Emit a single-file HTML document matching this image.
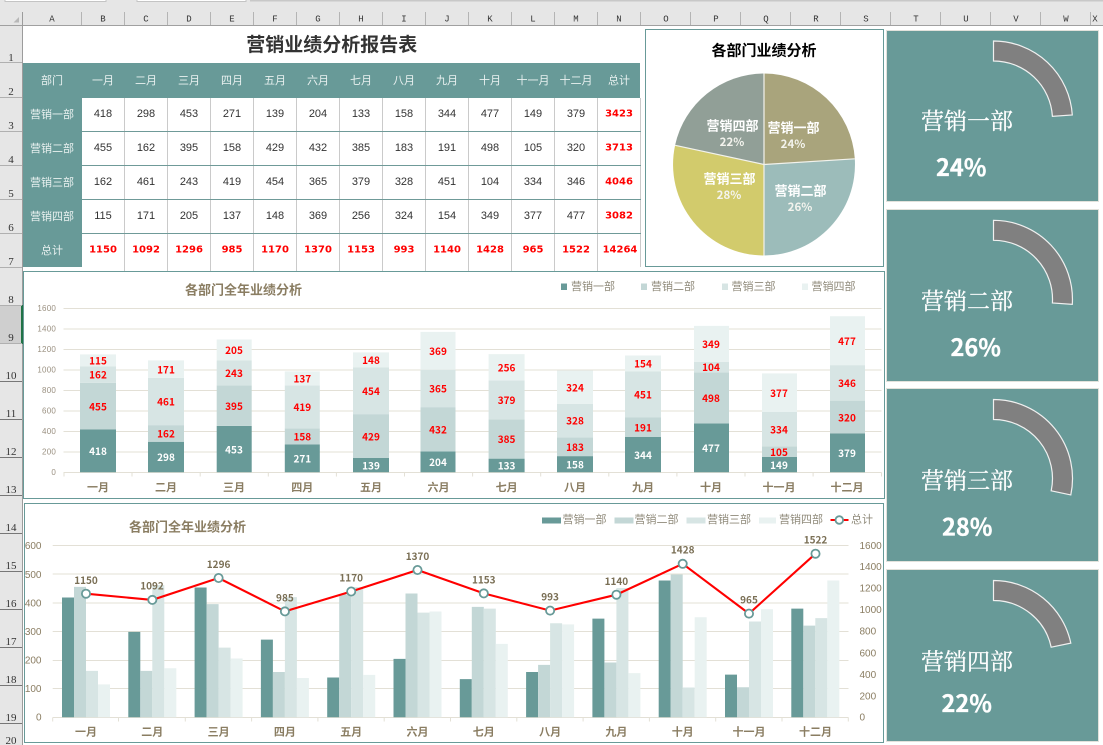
<!DOCTYPE html>
<html lang="zh"><head><meta charset="utf-8"><title>营销业绩分析报告表</title>
<style>
html,body{margin:0;padding:0;background:#fff;width:1103px;height:745px;overflow:hidden}
svg{display:block}
text{font-family:"Liberation Sans","Noto Sans CJK SC",sans-serif}
.m{text-anchor:middle;dominant-baseline:central}
.c{font-family:"Liberation Mono",monospace;font-size:9px;fill:#333;text-anchor:middle;dominant-baseline:central}
.r{font-family:"Liberation Serif",serif;font-size:11px;fill:#333;text-anchor:middle;dominant-baseline:central}
.h{font-family:"Noto Sans CJK SC",sans-serif;font-size:11px;fill:#e9f1f0;text-anchor:middle;dominant-baseline:central}
.n{font-size:11px;fill:#333;text-anchor:middle;dominant-baseline:central}
.t{font-family:"DejaVu Sans",sans-serif;font-weight:bold;font-size:10px;fill:#f00;text-anchor:middle;dominant-baseline:central}
.ct{font-family:"Noto Sans CJK SC",sans-serif;font-weight:bold;font-size:13px;fill:#8a7d62;text-anchor:middle;dominant-baseline:central}
.lg{font-family:"Noto Sans CJK SC",sans-serif;font-size:11px;fill:#8f8a7a;dominant-baseline:central}
.ax{font-size:8px;fill:#9a9080;text-anchor:end;dominant-baseline:central;letter-spacing:.2px}
.mo{font-family:"Noto Sans CJK SC",sans-serif;font-weight:bold;font-size:11px;fill:#8a7d62;text-anchor:middle;dominant-baseline:central}
.w{font-family:"Noto Sans CJK SC",sans-serif;font-weight:bold;font-size:10px;fill:#fff;text-anchor:middle}
.v{font-family:"Noto Sans CJK SC",sans-serif;font-weight:bold;font-size:10px;fill:#f00;text-anchor:middle}
.p{font-family:"Noto Sans CJK SC",sans-serif;font-weight:bold;font-size:13px;fill:#fff;text-anchor:middle;dominant-baseline:central}
.q{font-family:"Noto Sans CJK SC",sans-serif;font-weight:bold;font-size:11.5px;fill:#f4f4ee;text-anchor:middle;dominant-baseline:central}
.a2{font-size:10px;fill:#8a7d62;dominant-baseline:central}
.l2{font-family:"Noto Sans CJK SC",sans-serif;font-weight:bold;font-size:10px;fill:#7a6f55;text-anchor:middle}
.ci{font-family:"Noto Serif CJK SC",serif;font-size:23px;fill:#fff;stroke:#fff;stroke-width:.25px;dominant-baseline:central}
.cp{font-family:"Noto Sans CJK SC",sans-serif;font-weight:bold;font-size:23.5px;fill:#fff;stroke:#fff;stroke-width:.3px;dominant-baseline:central}
</style></head><body>
<svg width="1103" height="745" viewBox="0 0 1103 745" xmlns="http://www.w3.org/2000/svg">
<rect width="1103" height="745" fill="#fff"/>
<!-- sheet chrome -->
<rect width="1103" height="25" fill="#e6e6e6"/>
<rect width="22.5" height="745" fill="#e6e6e6"/>
<rect x="5" y="0" width="101" height="1.5" fill="#fff"/><rect x="137" y="0" width="109" height="1.5" fill="#fff"/><rect x="250" y="0" width="853" height="1.5" fill="#c8c8c8"/>
<path d="M106 0V1.5H5V0M246 0V1.5H137V0" stroke="#c4c4c4" fill="none"/>
<rect x="0" y="25" width="1103" height="1" fill="#a0a0a0"/>
<rect x="22" y="12" width="1" height="733" fill="#9c9c9c"/>
<path d="M19 17v5.5h-5.5z" fill="#b8b8b8"/>
<path d="M81.5 12v13M124.5 12v13M167.5 12v13M210.5 12v13M253.5 12v13M296.5 12v13M339.5 12v13M382.5 12v13M425.5 12v13M468.5 12v13M511.5 12v13M554.5 12v13M597.5 12v13M640.5 12v13M690.5 12v13M740.5 12v13M790.5 12v13M840.5 12v13M890.5 12v13M940.5 12v13M990.5 12v13M1040.5 12v13M1090.5 12v13" stroke="#b4b4b4"/>
<text class="c" x="52" y="19.5">A</text><text class="c" x="103" y="19.5">B</text><text class="c" x="146" y="19.5">C</text><text class="c" x="189" y="19.5">D</text><text class="c" x="232" y="19.5">E</text><text class="c" x="275" y="19.5">F</text><text class="c" x="318" y="19.5">G</text><text class="c" x="361" y="19.5">H</text><text class="c" x="404" y="19.5">I</text><text class="c" x="447" y="19.5">J</text><text class="c" x="490" y="19.5">K</text><text class="c" x="533" y="19.5">L</text><text class="c" x="576" y="19.5">M</text><text class="c" x="619" y="19.5">N</text><text class="c" x="666" y="19.5">O</text><text class="c" x="716" y="19.5">P</text><text class="c" x="766" y="19.5">Q</text><text class="c" x="816" y="19.5">R</text><text class="c" x="866" y="19.5">S</text><text class="c" x="916" y="19.5">T</text><text class="c" x="966" y="19.5">U</text><text class="c" x="1016" y="19.5">V</text><text class="c" x="1066" y="19.5">W</text><text class="c" x="1095" y="19.5">X</text>
<rect x="0" y="305" width="21" height="39" fill="#cfcfcf"/><rect x="21" y="305" width="2" height="39" fill="#217346"/>
<path d="M0 62.5h22M0 97.5h22M0 131.5h22M0 165.5h22M0 199.5h22M0 233.5h22M0 267.5h22M0 305.5h22M0 343.5h22" stroke="#b0b0b0"/>
<path d="M0 381.5h22M0 419.5h22M0 457.5h22M0 495.5h22M0 533.5h22M0 571.5h22M0 609.5h22M0 647.5h22M0 685.5h22M0 723.5h22" stroke="#777"/>
<text class="r" x="11" y="58">1</text><text class="r" x="11" y="92">2</text><text class="r" x="11" y="126">3</text><text class="r" x="11" y="160">4</text><text class="r" x="11" y="194">5</text><text class="r" x="11" y="228">6</text><text class="r" x="11" y="262">7</text><text class="r" x="11" y="300">8</text><text class="r" x="11" y="338" fill="#217346">9</text><text class="r" x="11" y="376">10</text><text class="r" x="11" y="414">11</text><text class="r" x="11" y="452">12</text><text class="r" x="11" y="490">13</text><text class="r" x="11" y="528">14</text><text class="r" x="11" y="566">15</text><text class="r" x="11" y="604">16</text><text class="r" x="11" y="642">17</text><text class="r" x="11" y="680">18</text><text class="r" x="11" y="718">19</text><text class="r" x="11" y="741">20</text>
<!-- table -->
<text x="331.7" y="43.5" class="m" style="font-family:'Noto Sans CJK SC',sans-serif;font-weight:bold;font-size:19px;fill:#333">营销业绩分析报告表</text>
<rect x="23" y="63" width="617" height="35" fill="#689a98"/><rect x="23" y="63" width="59" height="204" fill="#689a98"/>
<path d="M124.5 98v173M167.5 98v173M210.5 98v173M253.5 98v173M296.5 98v173M339.5 98v173M382.5 98v173M425.5 98v173M468.5 98v173M511.5 98v173M554.5 98v173M597.5 98v173M640.5 98v169" stroke="#cacaca"/>
<path d="M82 131.5h559M82 165.5h559M82 199.5h559M82 233.5h559" stroke="#6f9a98"/>
<text class="h" x="52" y="80">部门</text><text class="h" x="103" y="80">一月</text><text class="h" x="146" y="80">二月</text><text class="h" x="189" y="80">三月</text><text class="h" x="232" y="80">四月</text><text class="h" x="275" y="80">五月</text><text class="h" x="318" y="80">六月</text><text class="h" x="361" y="80">七月</text><text class="h" x="404" y="80">八月</text><text class="h" x="447" y="80">九月</text><text class="h" x="490" y="80">十月</text><text class="h" x="533" y="80">十一月</text><text class="h" x="576" y="80">十二月</text><text class="h" x="619" y="80">总计</text>
<text class="h" x="52" y="114">营销一部</text><text class="h" x="52" y="148">营销二部</text><text class="h" x="52" y="182">营销三部</text><text class="h" x="52" y="216">营销四部</text><text class="h" x="52" y="250">总计</text>
<text class="n" x="103" y="114">418</text><text class="n" x="146" y="114">298</text><text class="n" x="189" y="114">453</text><text class="n" x="232" y="114">271</text><text class="n" x="275" y="114">139</text><text class="n" x="318" y="114">204</text><text class="n" x="361" y="114">133</text><text class="n" x="404" y="114">158</text><text class="n" x="447" y="114">344</text><text class="n" x="490" y="114">477</text><text class="n" x="533" y="114">149</text><text class="n" x="576" y="114">379</text><text class="t" x="619" y="114">3423</text>
<text class="n" x="103" y="148">455</text><text class="n" x="146" y="148">162</text><text class="n" x="189" y="148">395</text><text class="n" x="232" y="148">158</text><text class="n" x="275" y="148">429</text><text class="n" x="318" y="148">432</text><text class="n" x="361" y="148">385</text><text class="n" x="404" y="148">183</text><text class="n" x="447" y="148">191</text><text class="n" x="490" y="148">498</text><text class="n" x="533" y="148">105</text><text class="n" x="576" y="148">320</text><text class="t" x="619" y="148">3713</text>
<text class="n" x="103" y="182">162</text><text class="n" x="146" y="182">461</text><text class="n" x="189" y="182">243</text><text class="n" x="232" y="182">419</text><text class="n" x="275" y="182">454</text><text class="n" x="318" y="182">365</text><text class="n" x="361" y="182">379</text><text class="n" x="404" y="182">328</text><text class="n" x="447" y="182">451</text><text class="n" x="490" y="182">104</text><text class="n" x="533" y="182">334</text><text class="n" x="576" y="182">346</text><text class="t" x="619" y="182">4046</text>
<text class="n" x="103" y="216">115</text><text class="n" x="146" y="216">171</text><text class="n" x="189" y="216">205</text><text class="n" x="232" y="216">137</text><text class="n" x="275" y="216">148</text><text class="n" x="318" y="216">369</text><text class="n" x="361" y="216">256</text><text class="n" x="404" y="216">324</text><text class="n" x="447" y="216">154</text><text class="n" x="490" y="216">349</text><text class="n" x="533" y="216">377</text><text class="n" x="576" y="216">477</text><text class="t" x="619" y="216">3082</text>
<text class="t" x="103" y="250">1150</text><text class="t" x="146" y="250">1092</text><text class="t" x="189" y="250">1296</text><text class="t" x="232" y="250">985</text><text class="t" x="275" y="250">1170</text><text class="t" x="318" y="250">1370</text><text class="t" x="361" y="250">1153</text><text class="t" x="404" y="250">993</text><text class="t" x="447" y="250">1140</text><text class="t" x="490" y="250">1428</text><text class="t" x="533" y="250">965</text><text class="t" x="576" y="250">1522</text><text class="t" x="620" y="250">14264</text>
<!-- pie -->
<rect x="645.5" y="29.5" width="238" height="237" fill="#fff" stroke="#689a98"/>
<text class="m" x="764" y="50" style="font-family:'Noto Sans CJK SC',sans-serif;font-weight:bold;font-size:15px;fill:#000">各部门业绩分析</text>
<path d="M764 164.5V73.5A91 91 0 0 1 854.8 158.8z" fill="#a9a47c"/>
<path d="M764 164.5L854.8 158.8A91 91 0 0 1 764 255.5z" fill="#9cbcba"/>
<path d="M764 164.5V255.5A91 91 0 0 1 675.1 145.3z" fill="#d2cb6c"/>
<path d="M764 164.5L675.1 145.3A91 91 0 0 1 764 73.5z" fill="#919f97"/>
<path d="M764 73.5V255.5M764 164.5L854.8 158.8M764 164.5L675.1 145.3" stroke="#f2f2ec" stroke-width="1.2" fill="none"/>
<text class="p" x="793.5" y="127">营销一部</text><text class="q" x="793" y="144">24%</text>
<text class="p" x="800.5" y="190">营销二部</text><text class="q" x="800" y="207">26%</text>
<text class="p" x="729.5" y="178">营销三部</text><text class="q" x="729" y="195">28%</text>
<text class="p" x="732.5" y="125">营销四部</text><text class="q" x="732" y="142">22%</text>
<!-- cards -->
<g fill="#689a98" stroke="#e2e2dc">
<rect x="886.5" y="30.5" width="212" height="171"/><rect x="886.5" y="209.5" width="212" height="172"/><rect x="886.5" y="388.5" width="212" height="173"/><rect x="886.5" y="569.5" width="212" height="172"/>
</g>
<g fill="#808080" stroke="#f0f0f0" stroke-width="1.2">
<path d="M993.5 41A79 79 0 0 1 1072.3 115L1052.4 116.3A59 59 0 0 0 993.5 61z"/>
<path d="M993.5 220.3A79 79 0 0 1 1072.3 304.3L1052.4 303A59 59 0 0 0 993.5 240.3z"/>
<path d="M993.5 399.5A79 79 0 0 1 1070.8 494.9L1051.2 490.8A59 59 0 0 0 993.5 419.5z"/>
<path d="M993.5 580.5A79 79 0 0 1 1070.8 643.1L1051.2 647.2A59 59 0 0 0 993.5 600.5z"/>
</g>
<text class="ci" x="921" y="119.5">营销一部</text><text class="cp" x="936" y="166">24%</text>
<text class="ci" x="921" y="299.5">营销二部</text><text class="cp" x="950.5" y="346">26%</text>
<text class="ci" x="921" y="479">营销三部</text><text class="cp" x="942" y="525.5">28%</text>
<text class="ci" x="921" y="660">营销四部</text><text class="cp" x="941.5" y="702">22%</text>
<!-- chart 1 -->
<rect x="23.5" y="271.5" width="861" height="227" fill="#fff" stroke="#689a98"/>
<text class="ct" x="243.5" y="289">各部门全年业绩分析</text>
<rect x="561" y="283.5" width="6" height="6.5" fill="#689a98"/><text class="lg" x="571" y="286">营销一部</text>
<rect x="641" y="283.5" width="6" height="6.5" fill="#c3d7d6"/><text class="lg" x="651" y="286">营销二部</text>
<rect x="722" y="283.5" width="6" height="6.5" fill="#d7e5e4"/><text class="lg" x="731.5" y="286">营销三部</text>
<rect x="802" y="283.5" width="6" height="6.5" fill="#e9f2f1"/><text class="lg" x="811.5" y="286">营销四部</text>
<path d="M63.5 308.5H881.5M63.5 329H881.5M63.5 349.5H881.5M63.5 370H881.5M63.5 390.5H881.5M63.5 411H881.5M63.5 431.5H881.5M63.5 452H881.5M63.5 472.5H881.5" stroke="#e3e0d6"/>
<path d="M64 472.5v4M132 472.5v4M200.2 472.5v4M268.3 472.5v4M336.4 472.5v4M404.5 472.5v4M472.6 472.5v4M540.7 472.5v4M608.8 472.5v4M676.9 472.5v4M745 472.5v4M813.1 472.5v4M881.5 472.5v4" stroke="#e3e0d6"/>
<text class="ax" x="56" y="308.5">1600</text><text class="ax" x="56" y="329">1400</text><text class="ax" x="56" y="349.5">1200</text><text class="ax" x="56" y="370">1000</text><text class="ax" x="56" y="390.5">800</text><text class="ax" x="56" y="411">600</text><text class="ax" x="56" y="431.5">400</text><text class="ax" x="56" y="452">200</text><text class="ax" x="56" y="472.5">0</text>
<g transform="translate(0 472.3) scale(1 -.1025)">
<path fill="#689a98" d="M80 0h36v418h-36zM148 0h36v298h-36zM216.7 0h35v453h-35zM284.8 0h35v271h-35zM353 0h36v139h-36zM420.5 0h35v204h-35zM488.6 0h36v133h-36zM557 0h36v158h-36zM625 0h36v344h-36zM694 0h35v477h-35zM762 0h35v149h-35zM830 0h35v379h-35z"/>
<path fill="#c3d7d6" d="M80 418h36v455h-36zM148 298h36v162h-36zM216.7 453h35v395h-35zM284.8 271h35v158h-35zM353 139h36v429h-36zM420.5 204h35v432h-35zM488.6 133h36v385h-36zM557 158h36v183h-36zM625 344h36v191h-36zM694 477h35v498h-35zM762 149h35v105h-35zM830 379h35v320h-35z"/>
<path fill="#d7e5e4" d="M80 873h36v162h-36zM148 460h36v461h-36zM216.7 848h35v243h-35zM284.8 429h35v419h-35zM353 568h36v454h-36zM420.5 636h35v365h-35zM488.6 518h36v379h-36zM557 341h36v328h-36zM625 535h36v451h-36zM694 975h35v104h-35zM762 254h35v334h-35zM830 699h35v346h-35z"/>
<path fill="#e9f2f1" d="M80 1035h36v115h-36zM148 921h36v171h-36zM216.7 1091h35v205h-35zM284.8 848h35v137h-35zM353 1022h36v148h-36zM420.5 1001h35v369h-35zM488.6 897h36v256h-36zM557 669h36v324h-36zM625 986h36v154h-36zM694 1079h35v349h-35zM762 588h35v377h-35zM830 1045h35v477h-35z"/>
</g>
<text class="w" x="98" y="455.1">418</text><text class="v" x="98" y="410.3">455</text><text class="v" x="98" y="378.7">162</text><text class="v" x="98" y="364.5">115</text>
<text class="w" x="166" y="461.2">298</text><text class="v" x="166" y="437.7">162</text><text class="v" x="166" y="405.7">461</text><text class="v" x="166" y="373.3">171</text>
<text class="w" x="234" y="453.3">453</text><text class="v" x="234" y="409.8">395</text><text class="v" x="234" y="377.1">243</text><text class="v" x="234" y="354.2">205</text>
<text class="w" x="302.3" y="462.6">271</text><text class="v" x="302.3" y="440.6">158</text><text class="v" x="302.3" y="411.1">419</text><text class="v" x="302.3" y="382.6">137</text>
<text class="w" x="371" y="469.4">139</text><text class="v" x="371" y="440.3">429</text><text class="v" x="371" y="395">454</text><text class="v" x="371" y="364.2">148</text>
<text class="w" x="438" y="466">204</text><text class="v" x="438" y="433.5">432</text><text class="v" x="438" y="392.6">365</text><text class="v" x="438" y="355">369</text>
<text class="w" x="506.6" y="469.7">133</text><text class="v" x="506.6" y="443.1">385</text><text class="v" x="506.6" y="404">379</text><text class="v" x="506.6" y="371.4">256</text>
<text class="w" x="575" y="468.4">158</text><text class="v" x="575" y="450.9">183</text><text class="v" x="575" y="424.7">328</text><text class="v" x="575" y="391.3">324</text>
<text class="w" x="643" y="458.9">344</text><text class="v" x="643" y="431.5">191</text><text class="v" x="643" y="398.5">451</text><text class="v" x="643" y="367.5">154</text>
<text class="w" x="711" y="452.1">477</text><text class="v" x="711" y="402.1">498</text><text class="v" x="711" y="371.2">104</text><text class="v" x="711" y="348">349</text>
<text class="w" x="779" y="468.9">149</text><text class="v" x="779" y="455.8">105</text><text class="v" x="779" y="433.3">334</text><text class="v" x="779" y="396.9">377</text>
<text class="w" x="847" y="457.1">379</text><text class="v" x="847" y="421.3">320</text><text class="v" x="847" y="387.1">346</text><text class="v" x="847" y="344.9">477</text>
<text class="mo" x="98" y="487">一月</text><text class="mo" x="166" y="487">二月</text><text class="mo" x="234" y="487">三月</text><text class="mo" x="302.3" y="487">四月</text><text class="mo" x="371" y="487">五月</text><text class="mo" x="438.5" y="487">六月</text><text class="mo" x="506.6" y="487">七月</text><text class="mo" x="575" y="487">八月</text><text class="mo" x="643" y="487">九月</text><text class="mo" x="711" y="487">十月</text><text class="mo" x="779" y="487">十一月</text><text class="mo" x="847" y="487">十二月</text>
<!-- chart 2 -->
<rect x="24.5" y="503.5" width="859" height="239" fill="#fff" stroke="#689a98"/>
<text class="ct" x="187.5" y="526">各部门全年业绩分析</text>
<rect x="542" y="517.5" width="19" height="6" fill="#689a98"/><text class="lg" x="562.5" y="519">营销一部</text>
<rect x="614.5" y="517.5" width="19" height="6" fill="#c3d7d6"/><text class="lg" x="634.5" y="519">营销二部</text>
<rect x="686.5" y="517.5" width="19" height="6" fill="#d7e5e4"/><text class="lg" x="707" y="519">营销三部</text>
<rect x="759" y="517.5" width="17" height="6" fill="#e9f2f1"/><text class="lg" x="779" y="519">营销四部</text>
<path d="M830.5 520h18" stroke="#f00" stroke-width="2"/><circle cx="839.3" cy="520" r="3.8" fill="#fff" stroke="#689a98" stroke-width="1.8"/><text class="lg" x="851" y="519">总计</text>
<path d="M52.7 545.5H848.5M52.7 574H848.5M52.7 603H848.5M52.7 631.5H848.5M52.7 660.5H848.5M52.7 688.5H848.5M52.7 717.5H848.5" stroke="#e3e0d6"/>
<path d="M52.7 717.5v4M118.5 717.5v4M185.3 717.5v4M251.6 717.5v4M317.9 717.5v4M384.2 717.5v4M450.5 717.5v4M516.8 717.5v4M583.1 717.5v4M649.4 717.5v4M715.7 717.5v4M782 717.5v4M848.3 717.5v4" stroke="#e3e0d6"/>
<text class="a2" x="41.5" y="546.5" text-anchor="end">600</text><text class="a2" x="41.5" y="575.5" text-anchor="end">500</text><text class="a2" x="41.5" y="604" text-anchor="end">400</text><text class="a2" x="41.5" y="632.5" text-anchor="end">300</text><text class="a2" x="41.5" y="661" text-anchor="end">200</text><text class="a2" x="41.5" y="689.5" text-anchor="end">100</text><text class="a2" x="41.5" y="718" text-anchor="end">0</text>
<text class="a2" x="859.5" y="546.5">1600</text><text class="a2" x="859.5" y="567.5">1400</text><text class="a2" x="859.5" y="589">1200</text><text class="a2" x="859.5" y="610.5">1000</text><text class="a2" x="859.5" y="632">800</text><text class="a2" x="859.5" y="654">600</text><text class="a2" x="859.5" y="675.5">400</text><text class="a2" x="859.5" y="697">200</text><text class="a2" x="859.5" y="718">0</text>
<g transform="translate(0 717.3) scale(1 -.28667)">
<path fill="#689a98" d="M62 0h12v418h-12zM128.3 0h12v298h-12zM194.6 0h12v453h-12zM260.9 0h12v271h-12zM327.2 0h12v139h-12zM393.5 0h12v204h-12zM459.8 0h12v133h-12zM526.1 0h12v158h-12zM592.4 0h12v344h-12zM658.7 0h12v477h-12zM725 0h12v149h-12zM791.3 0h12v379h-12z"/>
<path transform="translate(12)" fill="#c3d7d6" d="M62 0h12v455h-12zM128.3 0h12v162h-12zM194.6 0h12v395h-12zM260.9 0h12v158h-12zM327.2 0h12v429h-12zM393.5 0h12v432h-12zM459.8 0h12v385h-12zM526.1 0h12v183h-12zM592.4 0h12v191h-12zM658.7 0h12v498h-12zM725 0h12v105h-12zM791.3 0h12v320h-12z"/>
<path transform="translate(24)" fill="#d7e5e4" d="M62 0h12v162h-12zM128.3 0h12v461h-12zM194.6 0h12v243h-12zM260.9 0h12v419h-12zM327.2 0h12v454h-12zM393.5 0h12v365h-12zM459.8 0h12v379h-12zM526.1 0h12v328h-12zM592.4 0h12v451h-12zM658.7 0h12v104h-12zM725 0h12v334h-12zM791.3 0h12v346h-12z"/>
<path transform="translate(36)" fill="#e9f2f1" d="M62 0h12v115h-12zM128.3 0h12v171h-12zM194.6 0h12v205h-12zM260.9 0h12v137h-12zM327.2 0h12v148h-12zM393.5 0h12v369h-12zM459.8 0h12v256h-12zM526.1 0h12v324h-12zM592.4 0h12v154h-12zM658.7 0h12v349h-12zM725 0h12v377h-12zM791.3 0h12v477h-12z"/>
</g>
<polyline fill="none" stroke="#f00" stroke-width="2.1" points="86,593.7 152.3,599.9 218.6,578 284.9,611.4 351.2,591.5 417.5,570 483.8,593.4 550.1,610.6 616.4,594.7 682.7,563.8 749,613.6 815.5,553.7"/>
<g fill="#fff" stroke="#689a98" stroke-width="1.8">
<circle cx="86" cy="593.7" r="4.1"/><circle cx="152.3" cy="599.9" r="4.1"/><circle cx="218.6" cy="578" r="4.1"/><circle cx="284.9" cy="611.4" r="4.1"/><circle cx="351.2" cy="591.5" r="4.1"/><circle cx="417.5" cy="570" r="4.1"/><circle cx="483.8" cy="593.4" r="4.1"/><circle cx="550.1" cy="610.6" r="4.1"/><circle cx="616.4" cy="594.7" r="4.1"/><circle cx="682.7" cy="563.8" r="4.1"/><circle cx="749" cy="613.6" r="4.1"/><circle cx="815.5" cy="553.7" r="4.1"/>
</g>
<text class="l2" x="86" y="584">1150</text><text class="l2" x="152" y="589.5">1092</text><text class="l2" x="218.6" y="568">1296</text><text class="l2" x="284.9" y="601.5">985</text><text class="l2" x="351.2" y="581.5">1170</text><text class="l2" x="417.5" y="560">1370</text><text class="l2" x="483.8" y="583.5">1153</text><text class="l2" x="550.1" y="600.5">993</text><text class="l2" x="616.4" y="585">1140</text><text class="l2" x="682.7" y="553.5">1428</text><text class="l2" x="749" y="603.5">965</text><text class="l2" x="815.5" y="543.5">1522</text>
<text class="mo" x="86" y="731.5">一月</text><text class="mo" x="152.3" y="731.5">二月</text><text class="mo" x="218.6" y="731.5">三月</text><text class="mo" x="284.9" y="731.5">四月</text><text class="mo" x="351.2" y="731.5">五月</text><text class="mo" x="417.5" y="731.5">六月</text><text class="mo" x="483.8" y="731.5">七月</text><text class="mo" x="550.1" y="731.5">八月</text><text class="mo" x="616.4" y="731.5">九月</text><text class="mo" x="682.7" y="731.5">十月</text><text class="mo" x="749" y="731.5">十一月</text><text class="mo" x="815.5" y="731.5">十二月</text>
</svg>
</body></html>
